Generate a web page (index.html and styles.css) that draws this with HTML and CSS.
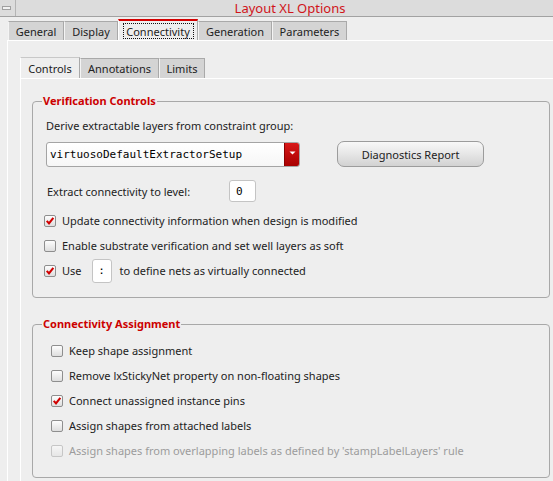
FILE: index.html
```html
<!DOCTYPE html>
<html>
<head>
<meta charset="utf-8">
<title>Layout XL Options</title>
<link rel="stylesheet" href="styles.css">
</head>
<body>
<div class="window">
  <div class="titlebar">
    <div class="sysbtn"><span class="sysbar"></span></div>
    <div class="title">Layout XL Options</div>
  </div>
  <div class="tabbar outer">
    <div class="tab w-general">General</div>
    <div class="tab w-display">Display</div>
    <div class="tab w-conn active red"><span class="focus">Connectivity</span></div>
    <div class="tab w-gen">Generation</div>
    <div class="tab w-param">Parameters</div>
  </div>
  <div class="pane outer-pane">
    <div class="tabbar inner">
      <div class="tab w-controls active">Controls</div>
      <div class="tab w-annot">Annotations</div>
      <div class="tab w-limits">Limits</div>
    </div>
    <div class="pane inner-pane">
      <section class="group group-verif">
        <div class="group-title">Verification Controls</div>
        <div class="label-row">Derive extractable layers from constraint group:</div>
        <div class="combo-row">
          <div class="combo">
            <span class="combo-text">virtuosoDefaultExtractorSetup</span>
            <span class="combo-btn"><svg width="7" height="4" viewBox="0 0 7 4"><path d="M0.5 0.5 H6.5 L3.5 3.5 Z" fill="#fff"/></svg></span>
          </div>
          <button class="push">Diagnostics Report</button>
        </div>
        <div class="level-row">
          <span class="level-label">Extract connectivity to level:</span>
          <span class="field spin">0</span>
        </div>
        <div class="check-row">
          <span class="cb checked"><svg width="12" height="12" viewBox="0 0 12 12"><path d="M2.1 5.9 L4.8 8.9 L10 2.3" fill="none" stroke="#d00000" stroke-width="2.5"/></svg></span>
          <span>Update connectivity information when design is modified</span>
        </div>
        <div class="check-row">
          <span class="cb"></span>
          <span>Enable substrate verification and set well layers as soft</span>
        </div>
        <div class="check-row">
          <span class="cb checked"><svg width="12" height="12" viewBox="0 0 12 12"><path d="M2.1 5.9 L4.8 8.9 L10 2.3" fill="none" stroke="#d00000" stroke-width="2.5"/></svg></span>
          <span class="use-label">Use</span>
          <span class="field sep">:</span>
          <span>to define nets as virtually connected</span>
        </div>
      </section>
      <section class="group group-assign">
        <div class="group-title">Connectivity Assignment</div>
        <div class="check-row">
          <span class="cb"></span>
          <span>Keep shape assignment</span>
        </div>
        <div class="check-row">
          <span class="cb"></span>
          <span>Remove lxStickyNet property on non-floating shapes</span>
        </div>
        <div class="check-row">
          <span class="cb checked"><svg width="12" height="12" viewBox="0 0 12 12"><path d="M2.1 5.9 L4.8 8.9 L10 2.3" fill="none" stroke="#d00000" stroke-width="2.5"/></svg></span>
          <span>Connect unassigned instance pins</span>
        </div>
        <div class="check-row">
          <span class="cb"></span>
          <span>Assign shapes from attached labels</span>
        </div>
        <div class="check-row disabled">
          <span class="cb"></span>
          <span>Assign shapes from overlapping labels as defined by 'stampLabelLayers' rule</span>
        </div>
      </section>
    </div>
  </div>
</div>
</body>
</html>
```

FILE: styles.css
```css
html, body {
  margin: 0;
  padding: 0;
}
body {
  width: 553px;
  height: 481px;
  overflow: hidden;
  background: #eeeeee;
  font-family: "Noto Sans", "Open Sans", sans-serif;
  font-size: 11px;
  color: #222222;
}
.window {
  width: 553px;
  height: 481px;
  display: flex;
  flex-direction: column;
  overflow: hidden;
}

/* title bar */
.titlebar {
  height: 16px;
  flex: 0 0 16px;
  display: flex;
  align-items: stretch;
  background: #dcdcdc;
  border-bottom: 1px solid #a2a2a2;
}
.sysbtn {
  width: 15px;
  border-right: 1px solid #b4b4b4;
  display: flex;
  align-items: center;
  justify-content: center;
}
.sysbar {
  width: 7px;
  height: 2px;
  background: #f2f2f2;
  border: 1px solid #a0a0a0;
  margin-right: 2px;
}
.title {
  flex: 1;
  text-align: center;
  padding-left: 11px;
  color: #d0141a;
  font-size: 13px;
  line-height: 16px;
}

/* tabs */
.tabbar {
  display: flex;
  align-items: flex-end;
  flex: 0 0 auto;
}
.tabbar.outer {
  height: 23px;
  padding-left: 8px;
}
.tabbar.inner {
  height: 21px;
  margin-top: 16px;
}
.tab {
  box-sizing: border-box;
  height: 19px;
  display: flex;
  align-items: center;
  justify-content: center;
  background: #d4d4d4;
  border: 1px solid #a9a9a9;
  border-bottom: none;
  border-left-color: #f4f4f4;
  color: #222;
  white-space: nowrap;
}
.tabbar.inner .tab {
  height: 20px;
}
.tab.active {
  height: 21px;
  background: #eeeeee;
  border-left-color: #ffffff;
  border-top-color: #c8c8c8;
  border-right-color: #a9a9a9;
}
.tabbar.inner .tab.active {
  height: 21px;
}
.tab.red {
  border-top: 2px solid #d40000;
}
.focus {
  box-sizing: border-box;
  border: 1px dotted #111;
  height: 16px;
  width: 71px;
  margin-top: 1px;
  display: flex;
  align-items: center;
  justify-content: center;
}
.w-general { width: 56px; }
.w-display { width: 54px; }
.w-conn { width: 80px; }
.w-gen { width: 74px; }
.w-param { width: 75px; }
.w-controls { width: 60px; }
.w-annot { width: 79px; }
.w-limits { width: 46px; }

/* panes */
.pane {
  background: #eeeeee;
  border-top: 1px solid #ffffff;
  border-left: 1px solid #ffffff;
}
.outer-pane {
  flex: 1 1 auto;
  min-height: 0;
  display: flex;
  flex-direction: column;
  margin-left: 7px;
  padding-left: 12px;
}
.inner-pane {
  flex: 1 1 auto;
  min-height: 0;
  padding-left: 11px;
  padding-top: 22px;
}

/* group boxes */
.group {
  box-sizing: border-box;
  width: 518px;
  border: 1px solid #a8a8a8;
  border-radius: 4px;
  padding-left: 11px;
}
.group-verif {
  height: 197px;
}
.group-assign {
  height: 154px;
  margin-top: 26px;
}
.group-title {
  display: table;
  margin-top: -8px;
  margin-left: -2px;
  padding: 0 1px;
  background: #eeeeee;
  color: #cc0000;
  font-weight: bold;
  line-height: 14px;
  height: 14px;
}

.label-row {
  margin-top: 10px;
  margin-left: 2px;
  line-height: 15px;
}
.combo-row {
  display: flex;
  align-items: center;
  margin-top: 8px;
  margin-left: 2px;
  height: 26px;
}
.combo {
  box-sizing: border-box;
  width: 254px;
  height: 25px;
  display: flex;
  align-items: stretch;
  border: 1px solid #a4a4a4;
  border-radius: 3px;
  background: linear-gradient(#ffffff, #f6f6f6);
  overflow: hidden;
}
.combo-text {
  flex: 1;
  display: flex;
  align-items: center;
  padding-left: 3px;
  font-family: "DejaVu Sans Mono", monospace;
  font-size: 11px;
  color: #000;
}
.combo-btn {
  width: 15px;
  display: flex;
  align-items: center;
  justify-content: center;
  padding-bottom: 3px;
  box-sizing: border-box;
  background: linear-gradient(#d81818, #a80000);
  border-left: 1px solid #8a0000;
}
.push {
  box-sizing: border-box;
  margin-left: 37px;
  width: 147px;
  height: 26px;
  border: 1px solid #9c9c9c;
  border-radius: 7px;
  background: linear-gradient(#f8f8f8, #e6e6e6 50%, #d2d2d2);
  font-family: "Noto Sans", sans-serif;
  font-size: 11px;
  color: #222;
  padding: 0;
}
.level-row {
  display: flex;
  align-items: center;
  margin-top: 13px;
  margin-left: 3px;
  height: 22px;
}
.level-label {
  width: 182px;
}
.field {
  box-sizing: border-box;
  display: inline-flex;
  align-items: center;
  background: #ffffff;
  border: 1px solid #c4c4c4;
  border-radius: 3px;
  font-family: "DejaVu Sans Mono", monospace;
  font-size: 11px;
  color: #000;
}
.spin {
  width: 27px;
  height: 22px;
  padding-left: 6px;
}
.sep {
  width: 20px;
  height: 24px;
  justify-content: center;
}
.check-row {
  display: flex;
  align-items: center;
  height: 25px;
  gap: 6px;
}
.level-row + .check-row {
  margin-top: 6px;
}
.group-assign .check-row {
  margin-left: 7px;
}
.group-assign .group-title + .check-row {
  margin-top: 7px;
}
.use-label {
  margin-right: -6px;
}
.use-label + .sep {
  margin-left: 10px;
  margin-right: 2px;
}
.cb {
  box-sizing: border-box;
  width: 12px;
  height: 12px;
  flex: 0 0 12px;
  border: 1px solid #8e8e8e;
  border-radius: 2px;
  background: linear-gradient(#fdfdfd, #dedede);
  display: flex;
  align-items: center;
  justify-content: center;
}
.cb svg {
  display: block;
}
.disabled {
  color: #9c9c9c;
}
.disabled .cb {
  border-color: #c6c6c6;
  background: linear-gradient(#f6f6f6, #e6e6e6);
}
```
